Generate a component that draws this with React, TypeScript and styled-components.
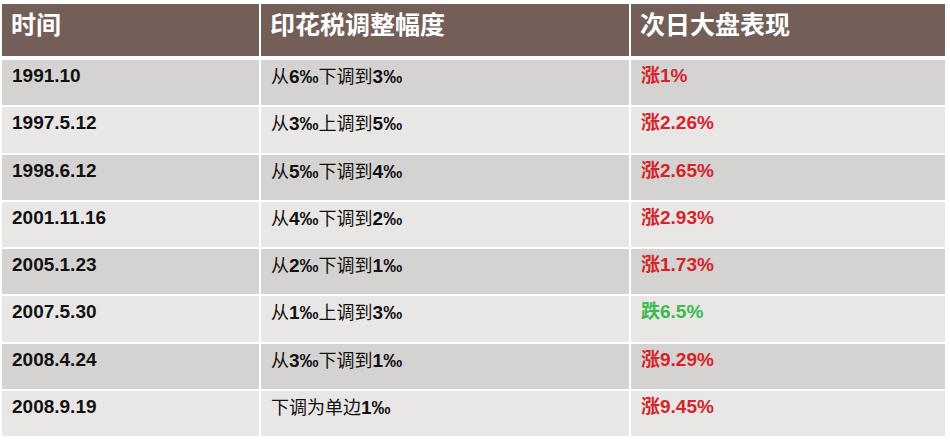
import styled, {createGlobalStyle} from "styled-components";

const GlobalStyle = createGlobalStyle`
  html, body {
    margin: 0;
    padding: 0;
    background: #ffffff;
  }
`

const Table = styled('div')`
  display: grid;
  grid-template-columns: 257px 368px 314px;
  column-gap: 2px;
  row-gap: 2px;
  padding: 4px 0 0 2px;
  width: 945px;
  font-family: 'Liberation Sans', 'Noto Sans CJK SC', sans-serif;
`

const HeadCell = styled('div')`
  height: 52px;
  margin-bottom: 2px;
  background-color: #735f57;
  color: #ffffff;
  font-family: 'Noto Sans CJK SC', sans-serif;
  font-weight: 700;
  font-size: 25px;
  line-height: 30px;
  padding: 4px 0 0 9px;
  box-sizing: border-box;
`

const Cell = styled('div')<{ $dark: boolean, $tone?: 'up' | 'down' }>`
  height: 45.25px;
  box-sizing: border-box;
  padding: 3px 0 0 10px;
  background-color: ${p => p.$dark ? '#d5d3d1' : '#e9e7e6'};
  color: ${p => p.$tone === 'up' ? '#d4232a' : p.$tone === 'down' ? '#3dba4e' : '#111111'};
  font-size: 19px;
  line-height: 25px;
  font-weight: 700;
`

const Plain = styled('span')`
  font-family: 'Noto Sans CJK SC', sans-serif;
  font-weight: 400;
  font-size: 18px;
`

const Num = styled('span')`
  font-family: 'Liberation Sans', sans-serif;
  font-weight: 700;
  font-size: 19px;
`

const rows = [
    {date: '1991.10', change: '从6‰下调到3‰', result: '涨1%', up: true},
    {date: '1997.5.12', change: '从3‰上调到5‰', result: '涨2.26%', up: true},
    {date: '1998.6.12', change: '从5‰下调到4‰', result: '涨2.65%', up: true},
    {date: '2001.11.16', change: '从4‰下调到2‰', result: '涨2.93%', up: true},
    {date: '2005.1.23', change: '从2‰下调到1‰', result: '涨1.73%', up: true},
    {date: '2007.5.30', change: '从1‰上调到3‰', result: '跌6.5%', up: false},
    {date: '2008.4.24', change: '从3‰下调到1‰', result: '涨9.29%', up: true},
    {date: '2008.9.19', change: '下调为单边1‰', result: '涨9.45%', up: true},
];

// numbers in bold latin, chinese in plain weight
function Mixed({text}: { text: string }) {
    const parts = text.split(/([0-9.‰%]+)/).filter(s => s !== '');
    return (
        <>
            {parts.map((s, i) => /[0-9]/.test(s)
                ? <Num key={i}>{s}</Num>
                : <Plain key={i}>{s}</Plain>)}
        </>
    )
}

export default function App() {
    return (
        <>
            <GlobalStyle/>
            <Table>
                <HeadCell>时间</HeadCell>
                <HeadCell>印花税调整幅度</HeadCell>
                <HeadCell>次日大盘表现</HeadCell>
                {rows.map((r, i) => {
                    const dark = i % 2 === 0;
                    return [
                        <Cell key={r.date + 'a'} $dark={dark}>{r.date}</Cell>,
                        <Cell key={r.date + 'b'} $dark={dark}><Mixed text={r.change}/></Cell>,
                        <Cell key={r.date + 'c'} $dark={dark} $tone={r.up ? 'up' : 'down'}>{r.result}</Cell>,
                    ];
                })}
            </Table>
        </>
    )
}
